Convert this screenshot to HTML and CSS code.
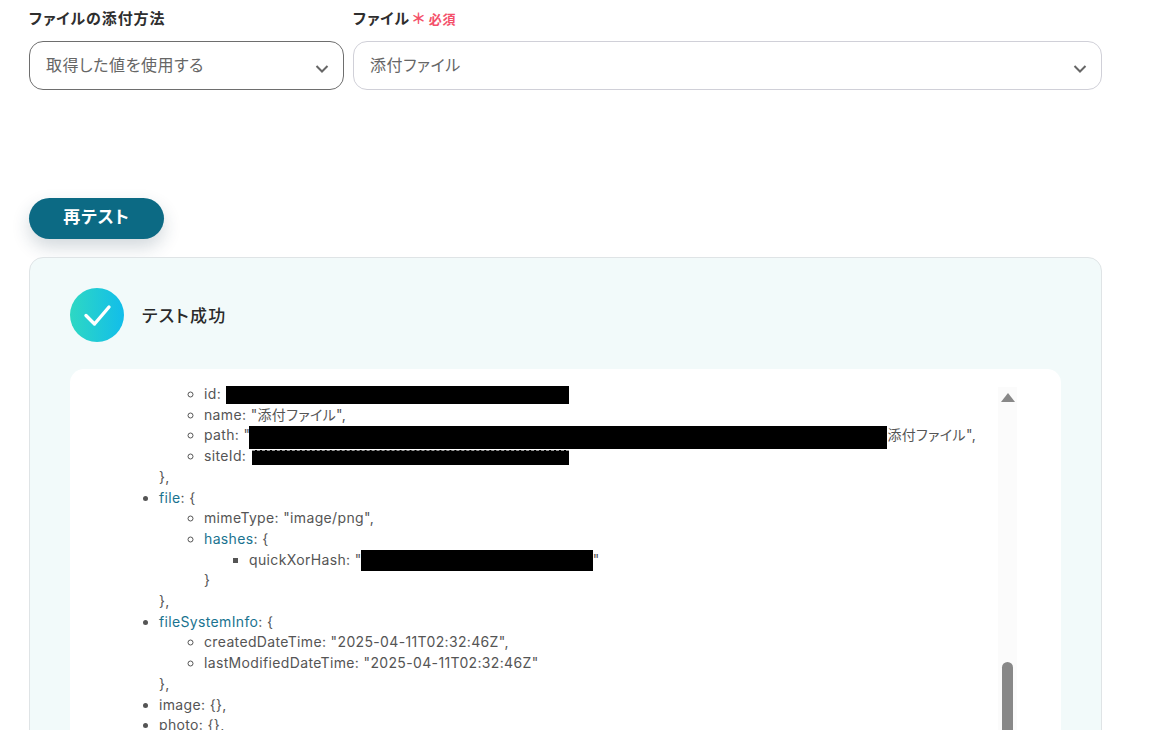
FILE: index.html
```html
<!DOCTYPE html>
<html lang="ja">
<head>
<meta charset="utf-8">
<title>テスト成功</title>
<link rel="stylesheet" href="styles.css">
</head>
<body>
<main class="page">
  <div class="fields">
    <div class="field field-method">
      <div class="label">ファイルの添付方法</div>
      <div class="select select-active">
        <span>取得した値を使用する</span>
        <svg class="chevron" viewBox="0 0 14 10" width="14" height="10"><path d="M1.5 2 7 7.5 12.5 2" fill="none" stroke="#666" stroke-width="2"/></svg>
      </div>
    </div>
    <div class="field field-file">
      <div class="label">ファイル<span class="req"><span class="star">＊</span>必須</span></div>
      <div class="select">
        <span>添付ファイル</span>
        <svg class="chevron" viewBox="0 0 14 10" width="14" height="10"><path d="M1.5 2 7 7.5 12.5 2" fill="none" stroke="#666" stroke-width="2"/></svg>
      </div>
    </div>
  </div>
  <button class="retest">再テスト</button>
  <section class="result">
    <div class="result-head">
      <div class="check">
        <svg viewBox="0 0 54 54" width="54" height="54"><path d="M16 27.5 24.5 36 39 19" fill="none" stroke="#fff" stroke-width="3.4" stroke-linecap="round" stroke-linejoin="round"/></svg>
      </div>
      <div class="result-title">テスト成功</div>
    </div>
    <div class="output">
      <div class="tree">
        <ul class="l1">
          <li class="bare">
            <ul class="l2">
              <li>id: <span class="mask mask-id"></span></li>
              <li>name: "添付ファイル",</li>
              <li>path: "<span class="mask mask-path"></span>添付ファイル",</li>
              <li>siteId: <span class="mask mask-site"></span></li>
            </ul>
            },
          </li>
          <li><span class="key">file</span>: {
            <ul class="l2">
              <li>mimeType: "image/png",</li>
              <li><span class="key">hashes</span>: {
                <ul class="l3">
                  <li>quickXorHash: "<span class="mask mask-hash"></span>"</li>
                </ul>
                }
              </li>
            </ul>
            },
          </li>
          <li><span class="key">fileSystemInfo</span>: {
            <ul class="l2">
              <li>createdDateTime: "2025-04-11T02:32:46Z",</li>
              <li>lastModifiedDateTime: "2025-04-11T02:32:46Z"</li>
            </ul>
            },
          </li>
          <li>image: {},</li>
          <li>photo: {},</li>
        </ul>
      </div>
      <div class="track">
        <span class="arrow"></span>
        <span class="thumb"></span>
      </div>
    </div>
  </section>
</main>
</body>
</html>
```
FILE: styles.css
```css
html, body {
  margin: 0;
  height: 730px;
  overflow: hidden;
  background: #fff;
}
body {
  font-family: Inter, "Noto Sans CJK JP", "Noto Sans", sans-serif;
  color: #333;
  font-feature-settings: "palt";
  letter-spacing: 0.025em;
}
.page {
  width: 1073px;
  padding: 9px 0 0 29px;
}
.fields {
  display: flex;
  gap: 9px;
}
.field-method { width: 315px; }
.field-file { width: 749px; }
.label {
  font-size: 15px;
  font-weight: 700;
  line-height: 20px;
  height: 32px;
  letter-spacing: 0.06em;
  color: #2e2e2e;
}
.req {
  margin-left: 1px;
  color: #f4506a;
  font-size: 13px;
  letter-spacing: 0.05em;
}
.star {
  margin-right: 2px;
  font-size: 15px;
  font-feature-settings: normal;
}
.select {
  box-sizing: border-box;
  height: 49px;
  border: 1px solid #d0d0d8;
  border-radius: 14px;
  padding: 0 14px 3px 16px;
  display: flex;
  align-items: center;
  justify-content: space-between;
  font-size: 16px;
  letter-spacing: 0.035em;
  color: #666;
  background: #fff;
}
.select-active { border-color: #6e6e6e; }
.chevron { margin-top: 9px; }
.retest {
  display: block;
  width: 135px;
  height: 41px;
  margin-top: 108px;
  border: 0;
  border-radius: 21px;
  background: #0c6a84;
  color: #fff;
  font: 700 17px/39px Inter, "Noto Sans CJK JP", sans-serif;
  font-feature-settings: "palt";
  letter-spacing: 0.05em;
  box-shadow: 0 8px 18px rgba(30, 60, 80, 0.2);
  padding: 0 0 2px;
}
.result {
  box-sizing: border-box;
  width: 1073px;
  height: 560px;
  margin-top: 18px;
  padding: 30px 40px 0;
  border: 1px solid #dfe4e6;
  border-radius: 14px;
  background: #f2fafa;
}
.result-head {
  display: flex;
  align-items: center;
  gap: 18px;
  height: 54px;
}
.check {
  width: 54px;
  height: 54px;
  border-radius: 50%;
  background: linear-gradient(90deg, #2ed8c3, #12bdea);
}
.check svg { display: block; }
.result-title {
  margin-top: -2px;
  font-size: 17px;
  font-weight: 500;
  letter-spacing: 0.08em;
  color: #2a2a2a;
}
.output {
  display: flex;
  justify-content: space-between;
  height: 440px;
  margin-top: 27px;
  padding: 0 44px 0 0;
  border-radius: 14px;
  background: #fff;
}
.tree {
  padding-top: 15px;
  font-size: 14px;
  line-height: 20.7px;
  letter-spacing: 0.025em;
  color: #555;
  white-space: nowrap;
}
.tree ul { margin: 0; }
.l1 { padding-left: 89px; list-style: disc; }
.l2 { padding-left: 45px; list-style: circle; }
.l3 { padding-left: 45px; list-style: square; }
.bare { list-style: none; }
.key { color: #1a7390; }
.mask {
  display: inline-block;
  background: #000;
  vertical-align: middle;
}
.mask-id { width: 343px; height: 18px; margin: -2px 0 -2px 1px; }
.mask-path { width: 638px; height: 23px; margin: -3px 0 -5px -1px; }
.mask-site { box-sizing: border-box; width: 317px; height: 15px; margin: -1px 0 -1px 1px; border-top: 1px dashed #999; }
.mask-hash { width: 232px; height: 21px; margin: -3px 0 -3px -1px; }
.track {
  display: flex;
  flex-direction: column;
  align-items: center;
  width: 19px;
  margin-top: 18px;
  padding-top: 6px;
  background: #fbfbfb;
}
.arrow {
  width: 0;
  height: 0;
  border-left: 7px solid transparent;
  border-right: 7px solid transparent;
  border-bottom: 9px solid #888;
}
.thumb {
  width: 11px;
  height: 200px;
  margin-top: 260px;
  border-radius: 6px;
  background: #888;
}
```
